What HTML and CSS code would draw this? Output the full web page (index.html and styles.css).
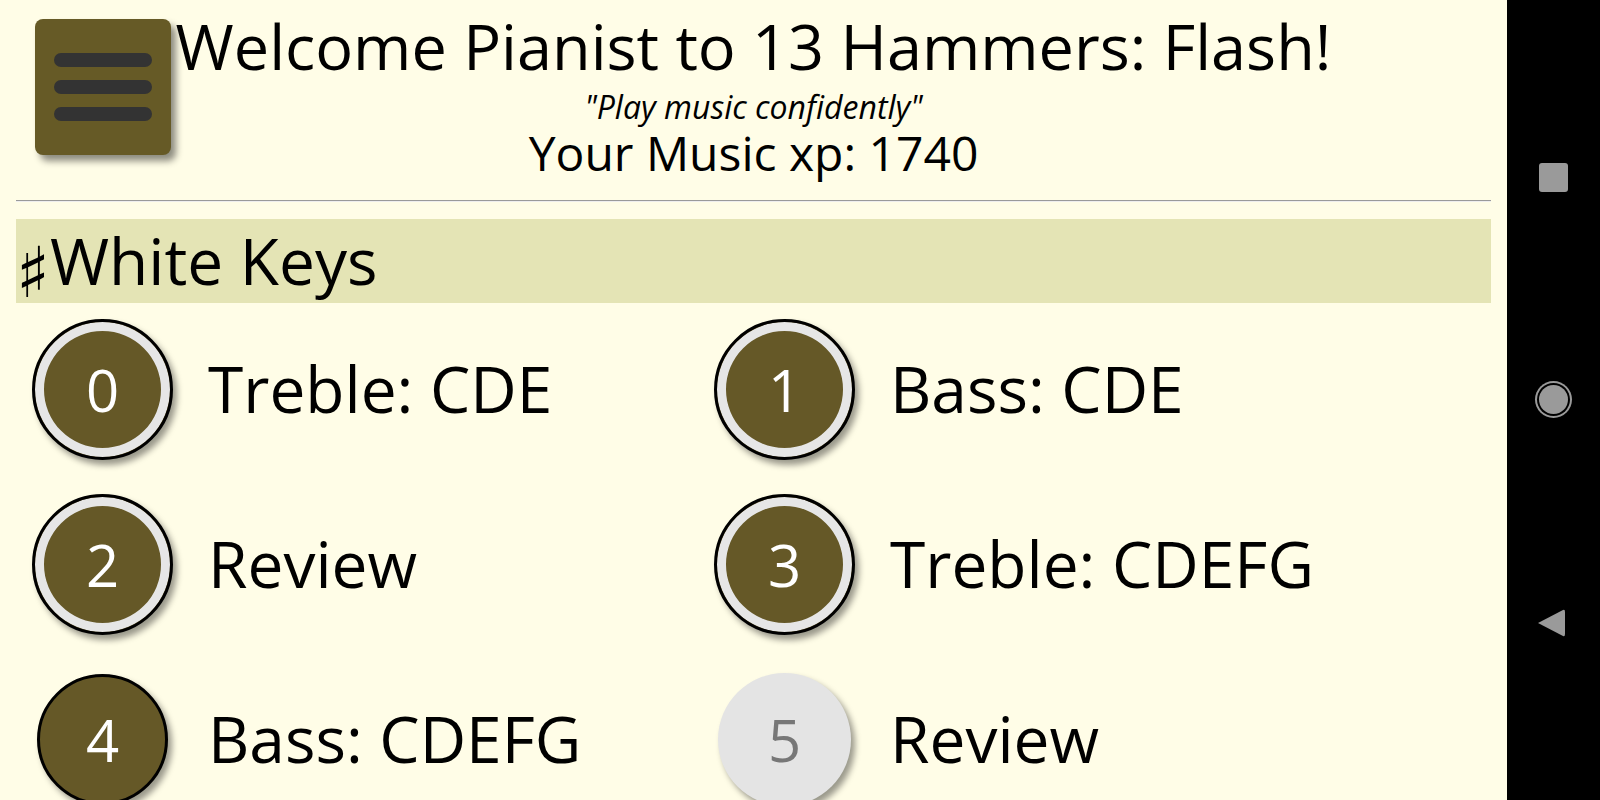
FILE: index.html
```html
<!DOCTYPE html>
<html>
<head>
    <title>13 Hammers: Flash</title>
    <link rel="stylesheet" href="styles.css">
</head>
<body>
    <div class="screen">
        <div class="app">
            <header class="top">
                <button class="menu-btn" type="button">
                    <span class="bar"></span>
                    <span class="bar"></span>
                    <span class="bar"></span>
                </button>
                <div class="welcome">
                    <h1>Welcome Pianist to 13 Hammers: Flash!</h1>
                    <p class="motto">"Play music confidently"</p>
                    <p class="xp">Your Music xp: <span id="xp">1740</span></p>
                </div>
            </header>
            <hr class="divider">

            <h2 class="section-title"><span class="sharp">&#9839;</span>White Keys</h2>

            <div class="lessons">
                <div class="lesson">
                    <div class="circle done">0</div>
                    <span class="lesson-name">Treble: CDE</span>
                </div>
                <div class="lesson">
                    <div class="circle done">1</div>
                    <span class="lesson-name">Bass: CDE</span>
                </div>
                <div class="lesson">
                    <div class="circle done">2</div>
                    <span class="lesson-name">Review</span>
                </div>
                <div class="lesson">
                    <div class="circle done">3</div>
                    <span class="lesson-name">Treble: CDEFG</span>
                </div>
                <div class="lesson">
                    <div class="circle">4</div>
                    <span class="lesson-name">Bass: CDEFG</span>
                </div>
                <div class="lesson">
                    <div class="circle locked">5</div>
                    <span class="lesson-name">Review</span>
                </div>
            </div>
        </div>

        <!-- android navigation bar -->
        <div class="navbar">
            <span class="nav-square"></span>
            <span class="nav-home"></span>
            <svg class="nav-back" width="30" height="32" viewBox="0 0 30 32">
                <path d="M2 16 L27 3 Q29 2 29 5 L29 27 Q29 30 27 29 Z" fill="#9a9a9a"/>
            </svg>
        </div>
    </div>
</body>
</html>
```

FILE: styles.css
```css
/* Reset */
html, body {
    margin: 0;
    padding: 0;
}

body {
    font-family: "Open Sans", "Noto Sans", sans-serif;
    background-color: #000;
    color: #000;
}

.screen {
    display: flex;
    width: 1600px;
    height: 800px;
    overflow: hidden;
}

/* App area */
.app {
    width: 1507px;
    background-color: #fffde7;
    overflow: hidden;
}

.top {
    display: grid;
    grid-template-columns: 1fr auto 1fr;
    padding-top: 19px;
}

.menu-btn {
    justify-self: start;
    margin-left: 35px;
    width: 136px;
    height: 136px;
    border: none;
    border-radius: 8px;
    background-color: #665a26;
    box-shadow: 5px 6px 7px rgba(0, 0, 0, 0.45);
    display: flex;
    flex-direction: column;
    align-items: center;
    padding: 34px 0 0;
    gap: 13px;
}

.bar {
    display: block;
    width: 98px;
    height: 14px;
    border-radius: 7px;
    background-color: #333;
}

.welcome {
    text-align: center;
}

.welcome h1 {
    margin: -9px 0 0;
    font-size: 63px;
    font-weight: normal;
    line-height: 72px;
    white-space: nowrap;
}

.motto {
    margin: 6px 0 0;
    font-size: 32px;
    font-style: italic;
    line-height: 38px;
}

.xp {
    margin: 1px 0 0;
    font-size: 48px;
    line-height: 52px;
}

.divider {
    margin: 21px 16px 0;
    border: none;
    border-top: 1px solid #9a9a9a;
    border-bottom: 1px solid #eeeeee;
}

/* Section header */
.section-title {
    margin: 17px 16px 0;
    height: 84px;
    background-color: #e4e4b5;
    font-size: 64px;
    font-weight: normal;
    line-height: 84px;
    white-space: nowrap;
}

.sharp {
    font-family: "DejaVu Sans", sans-serif;
    font-size: 70px;
    line-height: 0;
    vertical-align: -12px;
}

/* Lesson grid */
.lessons {
    display: grid;
    grid-template-columns: 682px 1fr;
    grid-auto-rows: 175px;
    padding: 16px 0 0 32px;
}

.lesson {
    display: flex;
    align-items: flex-start;
}

.circle {
    box-sizing: border-box;
    width: 131px;
    height: 131px;
    margin: 5px 6px 0 5px;
    border-radius: 50%;
    border: 3px solid #000;
    background-color: #655827;
    color: #fff;
    font-size: 58px;
    display: flex;
    align-items: center;
    justify-content: center;
    box-shadow: 4px 5px 6px rgba(0, 0, 0, 0.4);
    flex-shrink: 0;
}

.circle.done {
    width: 141px;
    height: 141px;
    margin: 0 1px 0 0;
    box-shadow: inset 0 0 0 9px #e6e6e6, 4px 5px 6px rgba(0, 0, 0, 0.4);
}

.circle.locked {
    width: 133px;
    height: 133px;
    margin: 4px 5px 0 4px;
    border: none;
    background-color: #e4e4e4;
    color: #777;
}

.lesson-name {
    margin-left: 34px;
    margin-top: 30px;
    font-size: 64px;
    line-height: 80px;
    white-space: nowrap;
}

/* Android nav bar */
.navbar {
    width: 93px;
    background-color: #000;
    display: flex;
    flex-direction: column;
    align-items: center;
    padding-top: 163px;
    box-sizing: border-box;
}

.nav-square {
    width: 29px;
    height: 29px;
    border-radius: 3px;
    background-color: #9a9a9a;
}

.nav-home {
    margin-top: 193px;
    width: 29px;
    height: 29px;
    border-radius: 50%;
    background-color: #9a9a9a;
    box-shadow: 0 0 0 2px #000, 0 0 0 4px #9a9a9a;
}

.nav-back {
    margin-top: 193px;
    margin-left: -6px;
}
```
